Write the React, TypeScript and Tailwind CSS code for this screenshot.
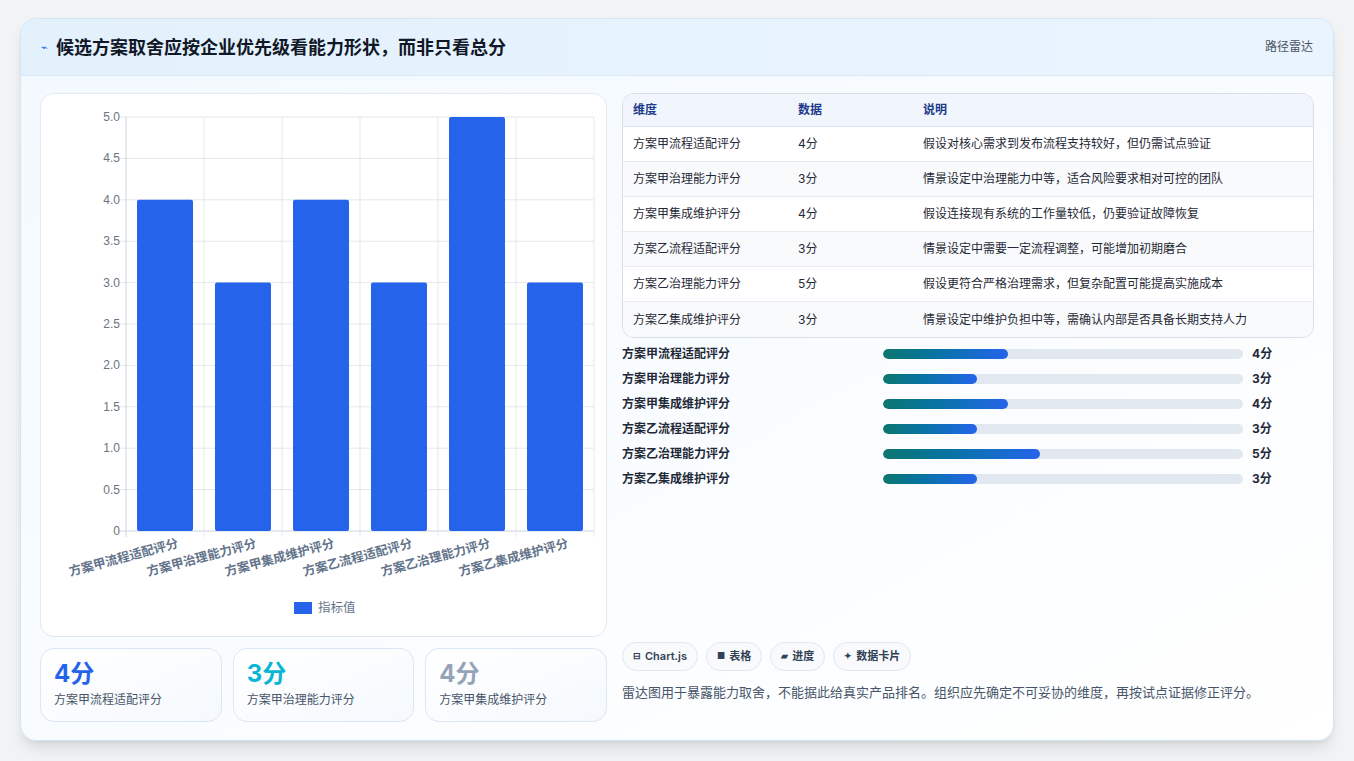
import React from "react";

const names = ["方案甲流程适配评分","方案甲治理能力评分","方案甲集成维护评分","方案乙流程适配评分","方案乙治理能力评分","方案乙集成维护评分"];
const vals = [4,3,4,3,5,3];
const notes = ["假设对核心需求到发布流程支持较好，但仍需试点验证","情景设定中治理能力中等，适合风险要求相对可控的团队","假设连接现有系统的工作量较低，仍要验证故障恢复","情景设定中需要一定流程调整，可能增加初期磨合","假设更符合严格治理需求，但复杂配置可能提高实施成本","情景设定中维护负担中等，需确认内部是否具备长期支持人力"];

function Chart() {
  const x0 = 85, x1 = 553, yTop = 23, yBot = 437;
  const cw = (x1 - x0) / 6;
  const ticks = [0,0.5,1,1.5,2,2.5,3,3.5,4,4.5,5];
  const y = (v: number) => yBot - (v / 5) * (yBot - yTop);
  return (
    <svg width="566" height="543" className="block">
      {ticks.map((t) => (
        <g key={t}>
          <line x1={x0 - 6} x2={x1} y1={y(t)} y2={y(t)} stroke={t === 0 ? "#cbd5e1" : "#e5e7eb"} />
          <text x={x0 - 6} y={y(t) + 4} textAnchor="end" fontSize="12" fill="#6b7280" fontFamily="Liberation Sans, sans-serif">{t === 0 ? "0" : t.toFixed(1)}</text>
        </g>
      ))}
      {[0,1,2,3,4,5,6].map((i) => (
        <line key={i} x1={x0 + i * cw} x2={x0 + i * cw} y1={yTop} y2={yBot + 6} stroke={i === 0 ? "#cbd5e1" : "#e5e7eb"} />
      ))}
      {vals.map((v, i) => (
        <rect key={i} x={x0 + i * cw + 11} y={y(v)} width={cw - 22} height={yBot - y(v)} fill="#2563eb" rx="2" />
      ))}
      {names.map((n, i) => (
        <text key={n} transform={`translate(${x0 + i * cw + cw / 2 + 14},${yBot + 16}) rotate(-15)`} textAnchor="end" fontSize="12.5" fontWeight="bold" fill="#64748b" fontFamily="Noto Sans CJK SC, sans-serif">{n}</text>
      ))}
      <rect x="253" y="508" width="18" height="12" fill="#2563eb" />
      <text x="277" y="518" fontSize="12.5" fill="#64748b" fontFamily="Noto Sans CJK SC, sans-serif">指标值</text>
    </svg>
  );
}

export default function App() {
  return (
    <div className="w-[1354px] h-[761px] bg-[#f1f3f5] pt-[18px] px-[20px]" style={{ fontFamily: "Inter, 'Noto Sans CJK SC', sans-serif" }}>
      <div className="h-[723px] rounded-[16px] border border-[#cfe6f5] bg-gradient-to-br from-[#f3f9ff] to-white shadow-lg overflow-hidden">
        <div className="h-[57px] flex items-center justify-between px-[20px] bg-gradient-to-r from-[#e3f1fd] to-[#eaf4fe] border-b border-[#d6e9f8]">
          <div className="flex items-center gap-2">
            <span className="text-[#2563eb] text-[11px]">⌁</span>
            <span className="text-[18px] font-bold text-[#111827]">候选方案取舍应按企业优先级看能力形状，而非只看总分</span>
          </div>
          <span className="text-[12px] text-[#4b5563]">路径雷达</span>
        </div>
        <div className="flex gap-[15px] px-[19px] pt-[17px]">
          <div className="w-[567px] flex flex-col gap-[11px]">
            <div className="h-[544px] bg-white rounded-[14px] border border-[#e2e8f0]"><Chart /></div>
            <div className="grid grid-cols-3 gap-[11px]">
              {[["4分","text-[#2563eb]","方案甲流程适配评分"],["3分","text-[#06b6d4]","方案甲治理能力评分"],["4分","text-[#94a3b8]","方案甲集成维护评分"]].map(([v,c,l]) => (
                <div key={l} className="h-[74px] rounded-[14px] border border-[#dbe7f3] bg-gradient-to-br from-white to-[#f5f9fd] px-[13px] pt-[10px]">
                  <div className={`text-[24px] font-bold leading-[30px] ${c}`}>{v}</div>
                  <div className="text-[12px] text-[#475569] mt-[2px]">{l}</div>
                </div>
              ))}
            </div>
          </div>
          <div className="flex-1 flex flex-col">
            <div className="rounded-[12px] border border-[#d5dee9] overflow-hidden bg-white">
              <div className="flex h-[33px] items-center bg-[#f1f6fd] border-b border-[#d9e2ec] text-[12px] font-bold text-[#1e3a8a]">
                <div className="w-[166px] pl-[10px]">维度</div><div className="w-[125px] pl-[9px]">数据</div><div className="pl-[9px]">说明</div>
              </div>
              {names.map((n, i) => (
                <div key={n} className={`flex h-[35px] items-center text-[12px] text-[#1f2937] ${i < 5 ? "border-b border-[#e5ebf1]" : ""} ${i % 2 ? "bg-[#f9fafb]" : "bg-white"}`}>
                  <div className="w-[166px] pl-[10px]">{n}</div><div className="w-[125px] pl-[9px]">{vals[i]}分</div><div className="pl-[9px]">{notes[i]}</div>
                </div>
              ))}
            </div>
            <div className="mt-[8px] flex flex-col gap-[9px]">
              {names.map((n, i) => (
                <div key={n} className="flex items-center h-[16px] text-[12px]">
                  <div className="w-[261px] font-semibold text-[#1f2937]">{n}</div>
                  <div className="w-[360px] h-[10px] rounded-full bg-[#e2e8f0] overflow-hidden">
                    <div className="h-full rounded-full bg-gradient-to-r from-[#0f766e] to-[#2563eb]" style={{ width: `${(vals[i] / 11.5) * 100}%` }} />
                  </div>
                  <div className="ml-[9px] font-bold text-[#1f2937]">{vals[i]}分</div>
                </div>
              ))}
            </div>
            <div className="mt-auto mb-[20px]">
              <div className="flex gap-[8px]">
                {[["⊟","Chart.js"],["■","表格"],["▰","进度"],["✦","数据卡片"]].map(([ic,t]) => (
                  <span key={t} className="h-[29px] px-[10px] flex items-center gap-[4px] rounded-full border border-[#e2e8f0] bg-[#f8fafc] text-[11px] font-semibold text-[#334155]">
                    <span className="text-[9px]">{ic}</span>{t}
                  </span>
                ))}
              </div>
              <div className="mt-[12px] text-[13px] text-[#475569]">雷达图用于暴露能力取舍，不能据此给真实产品排名。组织应先确定不可妥协的维度，再按试点证据修正评分。</div>
            </div>
          </div>
        </div>
      </div>
    </div>
  );
}
